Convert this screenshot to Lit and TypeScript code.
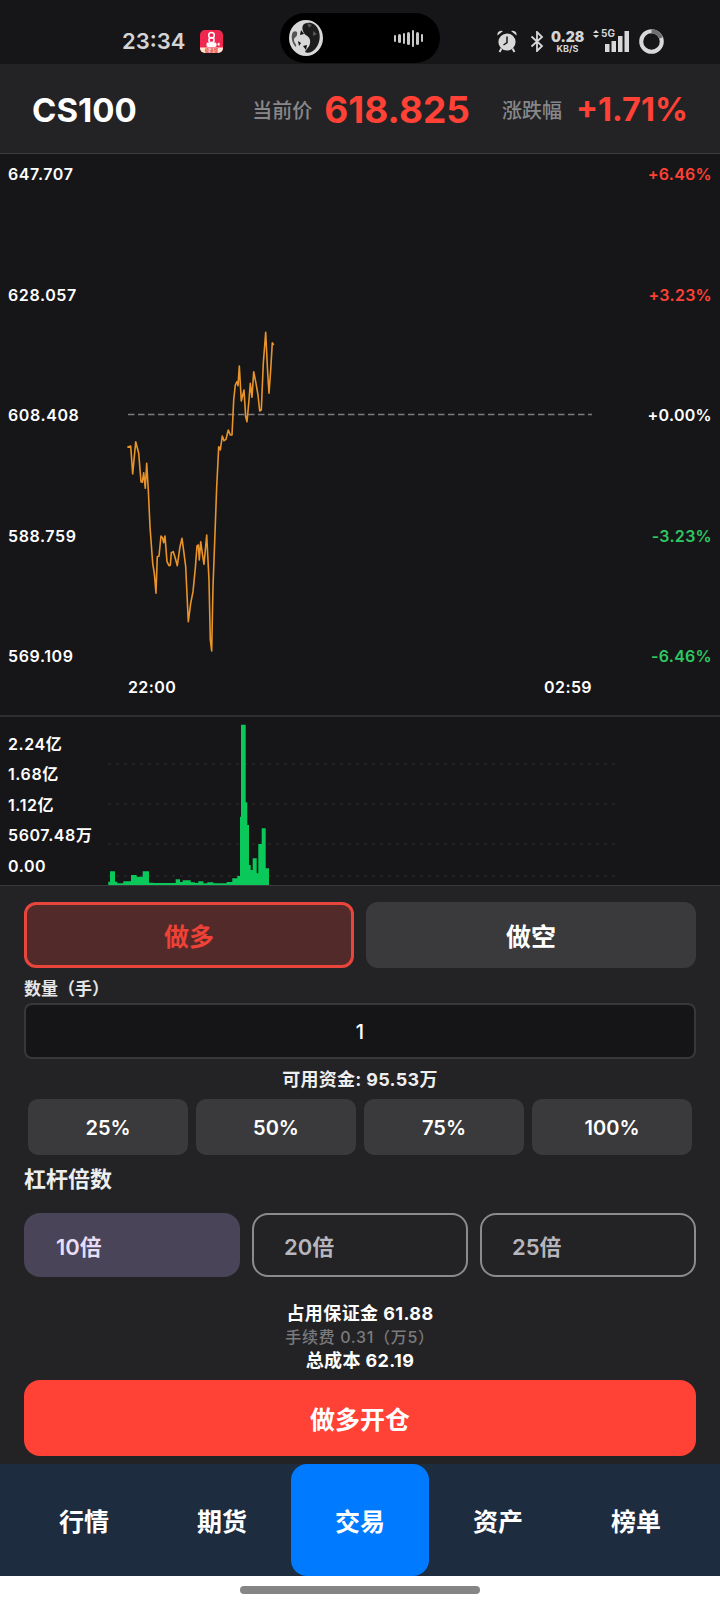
import {LitElement, html, css, svg} from 'lit';
import {customElement} from 'lit/decorators.js';

// traced from the reference, in 3x crop units (origin 100,320)
const LINE: number[][] = [[82,382],[92,378],[98,462],[107,365],[116,400],[123,485],[127,487],[131,458],[136,505],[140,430],[145,510],[150,620],[158,730],[163,760],[168,820],[172,710],[177,708],[183,648],[188,655],[191,668],[195,648],[201,725],[207,737],[211,736],[214,698],[220,695],[226,715],[232,737],[240,680],[246,655],[252,700],[257,740],[265,905],[272,850],[279,815],[286,745],[291,678],[295,675],[298,720],[302,665],[307,700],[312,733],[320,645],[327,780],[331,960],[335,993],[339,800],[345,640],[350,500],[356,380],[361,390],[367,348],[372,362],[378,358],[385,330],[391,345],[396,345],[401,240],[406,195],[411,185],[414,197],[418,138],[424,243],[432,210],[437,290],[441,305],[447,240],[451,190],[456,232],[461,155],[468,190],[474,225],[479,273],[484,270],[490,130],[497,37],[503,160],[507,220],[512,150],[517,68],[521,75]];

// x0, x1, top in 3x crop units (origin 0,710)
const BARS: number[][] = [[325,330,515],[330,345,484],[345,352,515],[352,370,520],[370,393,514],[393,410,495],[410,428,500],[428,447,484],[447,460,518],[460,527,519],[527,540,508],[540,548,516],[548,572,511],[572,585,517],[585,595,519],[595,610,514],[610,622,520],[622,640,517],[640,680,520],[680,697,516],[697,712,505],[712,720,498],[720,723,320],[723,737,44],[737,742,277],[742,747,345],[747,752,465],[752,758,480],[758,770,445],[770,775,490],[775,785,402],[785,797,355],[797,807,475]];

const PRICE_LEFT = ['647.707', '628.057', '608.408', '588.759', '569.109'];
const PRICE_RIGHT = [
  ['+6.46%', 'up'],
  ['+3.23%', 'up'],
  ['+0.00%', ''],
  ['-3.23%', 'down'],
  ['-6.46%', 'down'],
];
const VOL_LABELS = ['2.24亿', '1.68亿', '1.12亿', '5607.48万', '0.00'];
const PERCENTS = ['25%', '50%', '75%', '100%'];
const LEVERS = ['10倍', '20倍', '25倍'];
const TABS = ['行情', '期货', '交易', '资产', '榜单'];

const VOL_H = 168;
const linePoints = LINE.map(([x, y]) => `${(x / 3 + 100).toFixed(1)},${(y / 3 + 320 - 154).toFixed(1)}`).join(' ');
const barPath =
  `M${(BARS[0][0] / 3).toFixed(1)} ${VOL_H}` +
  BARS.map(([a, b, t]) => {
    const top = (t / 3 + 710 - 717).toFixed(1);
    return `L${(a / 3).toFixed(1)} ${top}L${(b / 3).toFixed(1)} ${top}`;
  }).join('') +
  `L${(BARS[BARS.length - 1][1] / 3).toFixed(1)} ${VOL_H}Z`;

@customElement('app-root')
export class AppRoot extends LitElement {
  static styles = css`
    :host {
      display: block;
      width: 720px;
      height: 1608px;
      overflow: hidden;
      background: #fff;
      font-family: Inter, "Noto Sans CJK SC", "Noto Sans", sans-serif;
      color: #fff;
    }
    .status {
      height: 64px;
      box-sizing: border-box;
      padding-top: 18px;
      background: #161618;
      display: flex;
      align-items: center;
      color: #d4d4d4;
    }
    .clock {
      margin-left: 122px;
      width: 62px;
      font-size: 22px;
      font-weight: 600;
      white-space: nowrap;
    }
    .app-icon {
      margin-left: 16px;
      display: block;
    }
    .island {
      margin-left: 57px;
      align-self: flex-end;
      margin-bottom: 1px;
      width: 160px;
      height: 50px;
      box-sizing: border-box;
      padding: 0 17px 0 9px;
      border-radius: 25px;
      background: #000;
      display: flex;
      align-items: center;
      justify-content: space-between;
    }
    .wave {
      display: flex;
      align-items: center;
      gap: 2px;
    }
    .wave i {
      display: block;
      width: 2.5px;
      border-radius: 2px;
      background: #c8c8c8;
    }
    .sys {
      margin-left: 56px;
      display: flex;
      align-items: center;
    }
    .sys svg {
      display: block;
    }
    .bt {
      margin-left: 12px;
    }
    .speed {
      margin-left: 7px;
      width: 33px;
      text-align: center;
      font-weight: 700;
    }
    .speed b {
      display: block;
      font-size: 14px;
      line-height: 14px;
    }
    .speed small {
      display: block;
      font-size: 9px;
      line-height: 9px;
      font-weight: 700;
    }
    .net {
      margin-left: 9px;
      position: relative;
      width: 38px;
      height: 24px;
    }
    .net span {
      position: absolute;
      left: 8px;
      top: -2px;
      font-size: 10px;
      line-height: 12px;
      font-weight: 700;
    }
    .ring {
      margin-left: 8px;
    }
    .head {
      height: 90px;
      box-sizing: border-box;
      border-bottom: 1px solid #3c3c3e;
      background: #232325;
      display: flex;
      align-items: center;
      padding: 2px 32px 0 32px;
    }
    .symbol {
      font-size: 33px;
      font-weight: 700;
      margin-right: auto;
    }
    .cap {
      font-size: 20px;
      font-weight: 500;
      color: #87878a;
    }
    .num {
      font-size: 37px;
      font-weight: 700;
      color: #ff4136;
      margin-left: 12px;
    }
    .num.sm {
      font-size: 32.5px;
      margin-left: 14px;
    }
    .cap.second {
      margin-left: 32px;
    }
    .chart {
      position: relative;
      height: 561px;
      box-sizing: border-box;
      padding: 10px 8px 49px;
      background: #161618;
      display: flex;
      justify-content: space-between;
      font-size: 16px;
      font-weight: 600;
    }
    .chart > svg {
      position: absolute;
      left: 0;
      top: 0;
    }
    .axis {
      position: relative;
      display: flex;
      flex-direction: column;
      justify-content: space-between;
      letter-spacing: 0.6px;
    }
    .axis.right {
      text-align: right;
      letter-spacing: 0.3px;
    }
    .up {
      color: #ff4136;
    }
    .down {
      color: #2fc862;
    }
    .times {
      position: absolute;
      left: 128px;
      width: 464px;
      top: 523px;
      display: flex;
      justify-content: space-between;
      letter-spacing: 0.4px;
    }
    .vol {
      position: relative;
      height: 170px;
      box-sizing: border-box;
      border-top: 2px solid #2e2e30;
      padding: 15px 8px 0;
      background: #161618;
      font-size: 16px;
      font-weight: 600;
      letter-spacing: 0.6px;
    }
    .vol svg {
      position: absolute;
      left: 0;
      top: 0;
    }
    .vol-labels {
      position: relative;
      display: flex;
      flex-direction: column;
      gap: 6.4px;
    }
    .vol-labels span {
      line-height: 24px;
    }
    .panel {
      height: 579px;
      box-sizing: border-box;
      border-top: 1px solid #3a3a3c;
      background: #232325;
      padding: 16px 24px 0;
    }
    .sides {
      display: grid;
      grid-template-columns: 1fr 1fr;
      gap: 12px;
    }
    .side {
      height: 66px;
      box-sizing: border-box;
      border-radius: 12px;
      background: #3a3a3c;
      display: flex;
      align-items: center;
      justify-content: center;
      font-size: 25px;
      font-weight: 700;
    }
    .side.on {
      border: 3px solid #e8453c;
      background: #532a2a;
      color: #ee4237;
    }
    .qty-label {
      margin-top: 10px;
      font-size: 17px;
      line-height: 22px;
      font-weight: 700;
      color: #e6e6e6;
    }
    .qty {
      margin-top: 3px;
      height: 56px;
      box-sizing: border-box;
      border: 2px solid #38383a;
      border-radius: 8px;
      background: #151517;
      display: flex;
      align-items: center;
      justify-content: center;
      padding-top: 2px;
      font-size: 20px;
      font-weight: 500;
    }
    .funds {
      margin-top: 10px;
      text-align: center;
      font-size: 18px;
      line-height: 22px;
      font-weight: 700;
      letter-spacing: 0.3px;
      color: #eee;
    }
    .pcts {
      margin: 8px 4px 0;
      display: grid;
      grid-template-columns: repeat(4, 1fr);
      gap: 8px;
    }
    .pct {
      height: 56px;
      border-radius: 10px;
      background: #3a3a3c;
      display: flex;
      align-items: center;
      justify-content: center;
      padding-top: 2px;
      box-sizing: border-box;
      font-size: 20px;
      font-weight: 600;
    }
    .lev-title {
      margin-top: 10px;
      font-size: 22px;
      line-height: 28px;
      font-weight: 700;
      color: #eee;
    }
    .levers {
      margin-top: 20px;
      display: grid;
      grid-template-columns: repeat(3, 1fr);
      gap: 12px;
    }
    .lever {
      height: 64px;
      box-sizing: border-box;
      border: 2px solid #8b8b8e;
      border-radius: 16px;
      padding-left: 30px;
      display: flex;
      align-items: center;
      font-size: 22px;
      font-weight: 600;
      color: #b8b6bd;
    }
    .lever.on {
      border: none;
      padding-left: 32px;
      background: #4a4458;
      color: #e8def8;
    }
    .costs {
      margin-top: 25px;
      text-align: center;
      font-size: 18px;
      line-height: 23.5px;
      font-weight: 700;
      letter-spacing: 0.4px;
    }
    .costs .fee {
      font-size: 16px;
      color: #7a7a7d;
      font-weight: 500;
      letter-spacing: 0.7px;
    }
    .open {
      margin-top: 7px;
      height: 76px;
      border-radius: 16px;
      background: #ff4136;
      display: flex;
      align-items: center;
      justify-content: center;
      font-size: 25px;
      font-weight: 700;
    }
    .tabs {
      height: 112px;
      padding: 0 15px;
      background: #1e2c3f;
      display: grid;
      grid-template-columns: repeat(5, 1fr);
    }
    .tab {
      display: flex;
      align-items: center;
      justify-content: center;
      font-size: 25px;
      font-weight: 700;
    }
    .tab.on {
      border-radius: 16px;
      background: #007aff;
    }
    .home {
      display: flex;
      justify-content: center;
      padding-top: 10px;
    }
    .home i {
      display: block;
      width: 240px;
      height: 8px;
      border-radius: 4px;
      background: #858585;
    }
  `;

  renderStatus() {
    return html`
      <div class="status">
        <span class="clock">23:34</span>
        <svg class="app-icon" width="23" height="23" viewBox="0 0 23 23">
          <defs><clipPath id="c"><rect width="23" height="23" rx="5"/></clipPath></defs>
          <g clip-path="url(#c)">
            <rect width="23" height="23" fill="#f0284f"/>
            <rect y="17.500" width="23" height="5.500" fill="#fde9d8"/>
          </g>
          <text x="11.500" y="22" text-anchor="middle" font-size="4.500" font-weight="700" fill="#e8483c">极速版</text>
          <circle cx="11.500" cy="5.300" r="2.800" fill="none" stroke="#fff" stroke-width="1.500"/>
          <circle cx="11.500" cy="10" r="2.600" fill="none" stroke="#fff" stroke-width="1.500"/>
          <rect x="6.500" y="12.500" width="10" height="4.500" rx="1.400" fill="#fff"/>
          <path d="M17.500 13.500l2-1v3.500l-2-1z" fill="#fff"/>
        </svg>
        <div class="island">
          <svg width="34" height="36" viewBox="0 0 34 36">
            <ellipse cx="17" cy="18" rx="17" ry="18" fill="#d8d8d8"/>
            <path d="M15 4c6-3 12 0 14 5 3 6 2 14-2 19-3 4-8 6-11 4 2-4 6-6 5-12-1-5-6-4-7-9-1-3-1-5 1-7z" fill="#1c1c1c"/>
            <path d="M4 12c3-2 5 0 4 3s-3 2-3 5 3 4 2 7c-3-2-6-10-3-15zM18 3l5 2-3 3zM24 11l4 3-4 2z" fill="#555"/>
            <path d="M12 10l3 4-4 1zM9 21l3 2-2 3zM14 26l4-1-1 5z" fill="#111"/>
          </svg>
          <div class="wave">
            ${[7, 9, 11, 13, 17, 13, 8].map((h) => html`<i style="height:${h}px"></i>`)}
          </div>
        </div>
        <div class="sys">
          <svg width="22" height="24" viewBox="0 0 22 24">
            <circle cx="11" cy="13" r="8.600" fill="#d8d8d8"/>
            <path d="M11 7.500V13.500L7.500 16" fill="none" stroke="#161618" stroke-width="1.500"/>
            <path d="M1.500 6.500A4 4 0 0 1 7 2zM20.500 6.500A4 4 0 0 0 15 2z" fill="#d8d8d8"/>
            <path d="M5.500 19.500L3.500 23M16.500 19.500L18.500 23" stroke="#d8d8d8" stroke-width="2"/>
          </svg>
          <svg class="bt" width="14" height="21" viewBox="0 0 14 21">
            <path d="M1.500 5.500L12 15L7 20V1L12 6L1.500 15.500" fill="none" stroke="#d8d8d8" stroke-width="1.800"/>
          </svg>
          <div class="speed"><b>0.28</b><small>KB/S</small></div>
          <div class="net">
            <svg width="38" height="24" viewBox="0 0 38 24">
              <path d="M0 4L3 1L6 4zM0 6L3 9L6 6z" fill="#d8d8d8"/>
              <rect x="12" y="15" width="4.500" height="8" fill="#d8d8d8"/>
              <rect x="18.500" y="12" width="4.500" height="11" fill="#d8d8d8"/>
              <rect x="25" y="7" width="4.500" height="16" fill="#d8d8d8"/>
              <rect x="31.500" y="2" width="4.500" height="21" fill="#d8d8d8"/>
            </svg>
            <span>5G</span>
          </div>
          <svg class="ring" width="25" height="25" viewBox="0 0 25 25">
            <circle cx="12.500" cy="12.500" r="10.300" fill="none" stroke="#d8d8d8" stroke-width="4"/>
            <path d="M12.500 2.200A10.300 10.300 0 0 1 22 9" fill="none" stroke="#6f6f6f" stroke-width="4"/>
          </svg>
        </div>
      </div>
    `;
  }

  renderChart() {
    return html`
      <div class="chart">
        <svg width="720" height="561" viewBox="0 0 720 561">
          <line x1="128" x2="592" y1="260.500" y2="260.500" stroke="#7c7c7f" stroke-width="1.600" stroke-dasharray="6.500 3.500"/>
          <polyline points=${linePoints} fill="none" stroke="#e8942a" stroke-width="1.600" stroke-linejoin="round"/>
        </svg>
        <div class="axis">
          ${PRICE_LEFT.map((p) => html`<span>${p}</span>`)}
        </div>
        <div class="axis right">
          ${PRICE_RIGHT.map(([p, c]) => html`<span class=${c}>${p}</span>`)}
        </div>
        <div class="times"><span>22:00</span><span>02:59</span></div>
      </div>
    `;
  }

  renderVolume() {
    const gridY = [47, 87, 127, 159];
    return html`
      <div class="vol">
        <svg width="720" height=${VOL_H} viewBox="0 0 720 ${VOL_H}">
          ${gridY.map((y) => svg`<line x1="108" x2="616" y1=${y} y2=${y} stroke="#303032" stroke-dasharray="3 5"/>`)}
          <path d=${barPath} fill="#0ac95a"/>
        </svg>
        <div class="vol-labels">
          ${VOL_LABELS.map((l) => html`<span>${l}</span>`)}
        </div>
      </div>
    `;
  }

  renderPanel() {
    return html`
      <div class="panel">
        <div class="sides">
          <div class="side on">做多</div>
          <div class="side">做空</div>
        </div>
        <div class="qty-label">数量（手）</div>
        <div class="qty">1</div>
        <div class="funds">可用资金: 95.53万</div>
        <div class="pcts">
          ${PERCENTS.map((p) => html`<div class="pct">${p}</div>`)}
        </div>
        <div class="lev-title">杠杆倍数</div>
        <div class="levers">
          ${LEVERS.map((l, i) => html`<div class="lever ${i === 0 ? 'on' : ''}">${l}</div>`)}
        </div>
        <div class="costs">
          <div>占用保证金 61.88</div>
          <div class="fee">手续费 0.31（万5）</div>
          <div>总成本 62.19</div>
        </div>
        <div class="open">做多开仓</div>
      </div>
    `;
  }

  render() {
    return html`
      ${this.renderStatus()}
      <div class="head">
        <span class="symbol">CS100</span>
        <span class="cap">当前价</span>
        <span class="num">618.825</span>
        <span class="cap second">涨跌幅</span>
        <span class="num sm">+1.71%</span>
      </div>
      ${this.renderChart()}
      ${this.renderVolume()}
      ${this.renderPanel()}
      <div class="tabs">
        ${TABS.map((t, i) => html`<div class="tab ${i === 2 ? 'on' : ''}">${t}</div>`)}
      </div>
      <div class="home"><i></i></div>
    `;
  }
}
